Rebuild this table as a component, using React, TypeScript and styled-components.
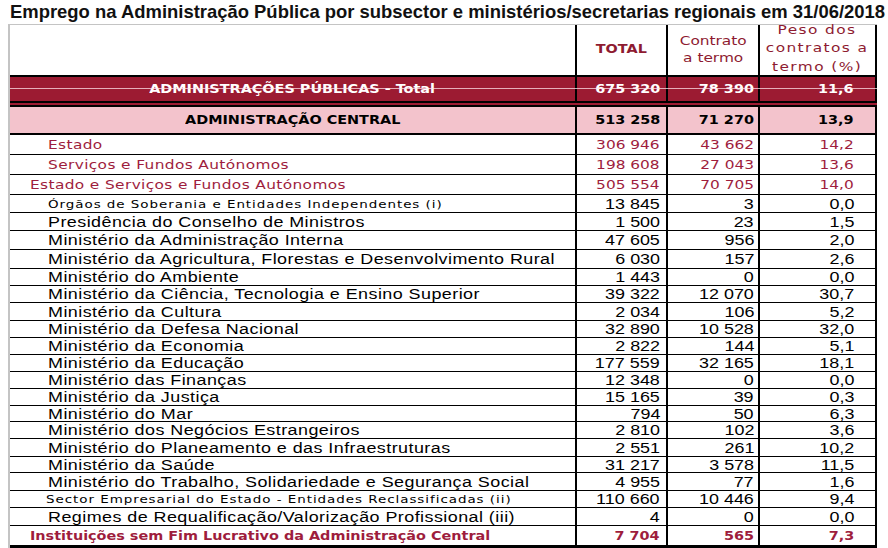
import React from 'react';
import styled, { createGlobalStyle, css } from 'styled-components';

const Global = createGlobalStyle`
  html, body { margin: 0; padding: 0; background: #ffffff; }
  body { width: 888px; height: 548px; overflow: hidden; }
`;

const RED = '#9e1d3d';
const HEAD_RED = '#8e1b31';
const BAND = '#9c1b32';
const PINK = '#f3c3cc';

const TAHOMA = '"DejaVu Sans", Verdana, sans-serif';
const ARIAL = '"Liberation Sans", Arial, sans-serif';

type Kind = 'band' | 'central' | 'red' | 'redTop' | 'small' | 'plain' | 'inst';

const Page = styled.div`
  display: flex;
  flex-direction: column;
`;

const Title = styled.h1`
  margin: 0;
  height: 24px;
  padding-left: 10px;
  font: bold 19px/24px ${ARIAL};
  color: #111111;
  white-space: nowrap;
`;

const TitleText = styled.span`
  display: inline-block;
  transform: scaleX(0.97);
  transform-origin: left center;
`;

const Table = styled.div`
  margin-left: 8px;
  width: 869px;
  box-sizing: border-box;
  border-left: 2px solid #c4c4c4;
  border-top: 1px solid #c4c4c4;
  display: flex;
  flex-direction: column;
`;

const COLS = '567px 91px 92px 117px';

const HeaderRow = styled.div`
  display: grid;
  grid-template-columns: ${COLS};
  grid-template-rows: 50px;
  height: 50px;
`;

const rowSkin: Record<Kind, ReturnType<typeof css>> = {
  band: css`
    background: ${BAND};
    color: #ffffff;
    font: bold 12px ${TAHOMA};
    border-top: 2px solid #000;
    border-bottom: 6px double #000;
    position: relative;
    &::after {
      content: '';
      position: absolute;
      left: 0;
      right: 0;
      top: 11px;
      height: 1px;
      background: rgba(255, 225, 232, 0.75);
    }
  `,
  central: css`
    background: ${PINK};
    color: #000;
    font: bold 12px ${TAHOMA};
    border-bottom: 2px solid #000;
  `,
  red: css`
    color: ${RED};
    font: 12px ${TAHOMA};
    border-bottom: 1px solid #000;
  `,
  redTop: css`
    color: ${RED};
    font: 12px ${TAHOMA};
    border-bottom: 1px solid #000;
  `,
  small: css`
    color: #000;
    font: 14px ${ARIAL};
    border-bottom: 1px solid #000;
  `,
  plain: css`
    color: #000;
    font: 14px ${ARIAL};
    border-bottom: 1px solid #000;
  `,
  inst: css`
    color: ${RED};
    font: bold 12px ${TAHOMA};
    border-bottom: 3px solid #000;
  `,
};

const Row = styled.div<{ $kind: Kind; $h: number }>`
  display: grid;
  grid-template-columns: ${COLS};
  height: ${(p) => p.$h}px;
  box-sizing: border-box;
  ${(p) => rowSkin[p.$kind]}
`;

const Cell = styled.div<{ $align: 'left' | 'right' | 'center'; $pad?: number }>`
  display: flex;
  align-items: center;
  justify-content: ${(p) =>
    p.$align === 'left' ? 'flex-start' : p.$align === 'right' ? 'flex-end' : 'center'};
  padding-left: ${(p) => (p.$align === 'left' ? p.$pad ?? 0 : 0)}px;
  padding-right: ${(p) => (p.$align === 'right' ? p.$pad ?? 0 : 0)}px;
  border-right: 2px solid #000;
  box-sizing: border-box;
  overflow: visible;
  white-space: nowrap;
  line-height: 1;
`;

const Stretch = styled.span<{
  $origin: 'left' | 'right' | 'center';
  $scale: number;
  $ls?: number;
  $small?: boolean;
}>`
  display: inline-block;
  transform: scaleX(${(p) => p.$scale});
  transform-origin: ${(p) => p.$origin} center;
  letter-spacing: ${(p) => p.$ls ?? 0}px;
  ${(p) =>
    p.$small &&
    css`
      font: 10.5px ${TAHOMA};
    `}
`;

const HeadCell = styled.div<{ $bold?: boolean; $lift?: number }>`
  display: flex;
  align-items: center;
  justify-content: center;
  min-height: 0;
  padding-bottom: ${(p) => p.$lift ?? 0}px;
  border-right: 2px solid #000;
  box-sizing: border-box;
  overflow: visible;
  color: ${HEAD_RED};
  font: ${(p) => (p.$bold ? 'bold' : 'normal')} 12px ${TAHOMA};
`;

const HeadText = styled.span<{ $lh: number; $ls?: number; $scale: number }>`
  display: inline-block;
  flex-shrink: 0;
  text-align: center;
  line-height: ${(p) => p.$lh}px;
  letter-spacing: ${(p) => p.$ls ?? 0}px;
  transform: scaleX(${(p) => p.$scale});
  transform-origin: center;
`;

type Line = {
  kind: Kind;
  h: number;
  label: string;
  indent?: number;
  center?: boolean;
  v: [string, string, string];
};

const LINES: Line[] = [
  { kind: 'band', h: 32, label: 'ADMINISTRAÇÕES PÚBLICAS - Total', center: true, v: ['675 320', '78 390', '11,6'] },
  { kind: 'central', h: 28, label: 'ADMINISTRAÇÃO CENTRAL', center: true, v: ['513 258', '71 270', '13,9'] },
  { kind: 'red', h: 20, label: 'Estado', indent: 38, v: ['306 946', '43 662', '14,2'] },
  { kind: 'red', h: 20, label: 'Serviços e Fundos Autónomos', indent: 38, v: ['198 608', '27 043', '13,6'] },
  { kind: 'redTop', h: 20, label: 'Estado e Serviços e Fundos Autónomos', indent: 20, v: ['505 554', '70 705', '14,0'] },
  { kind: 'small', h: 18, label: 'Órgãos de Soberania e Entidades Independentes (i)', indent: 38, v: ['13 845', '3', '0,0'] },
  { kind: 'plain', h: 18, label: 'Presidência do Conselho de Ministros', indent: 38, v: ['1 500', '23', '1,5'] },
  { kind: 'plain', h: 19, label: 'Ministério da Administração Interna', indent: 38, v: ['47 605', '956', '2,0'] },
  { kind: 'plain', h: 19, label: 'Ministério da Agricultura, Florestas e Desenvolvimento Rural', indent: 38, v: ['6 030', '157', '2,6'] },
  { kind: 'plain', h: 17, label: 'Ministério do Ambiente', indent: 38, v: ['1 443', '0', '0,0'] },
  { kind: 'plain', h: 17, label: 'Ministério da Ciência, Tecnologia e Ensino Superior', indent: 38, v: ['39 322', '12 070', '30,7'] },
  { kind: 'plain', h: 18, label: 'Ministério da Cultura', indent: 38, v: ['2 034', '106', '5,2'] },
  { kind: 'plain', h: 17, label: 'Ministério da Defesa Nacional', indent: 38, v: ['32 890', '10 528', '32,0'] },
  { kind: 'plain', h: 17, label: 'Ministério da Economia', indent: 38, v: ['2 822', '144', '5,1'] },
  { kind: 'plain', h: 17, label: 'Ministério da Educação', indent: 38, v: ['177 559', '32 165', '18,1'] },
  { kind: 'plain', h: 17, label: 'Ministério das Finanças', indent: 38, v: ['12 348', '0', '0,0'] },
  { kind: 'plain', h: 17, label: 'Ministério da Justiça', indent: 38, v: ['15 165', '39', '0,3'] },
  { kind: 'plain', h: 16, label: 'Ministério do Mar', indent: 38, v: ['794', '50', '6,3'] },
  { kind: 'plain', h: 17, label: 'Ministério dos Negócios Estrangeiros', indent: 38, v: ['2 810', '102', '3,6'] },
  { kind: 'plain', h: 18, label: 'Ministério do Planeamento e das Infraestruturas', indent: 38, v: ['2 551', '261', '10,2'] },
  { kind: 'plain', h: 16, label: 'Ministério da Saúde', indent: 38, v: ['31 217', '3 578', '11,5'] },
  { kind: 'plain', h: 18, label: 'Ministério do Trabalho, Solidariedade e Segurança Social', indent: 38, v: ['4 955', '77', '1,6'] },
  { kind: 'small', h: 17, label: 'Sector Empresarial do Estado - Entidades Reclassificadas (ii)', indent: 36, v: ['110 660', '10 446', '9,4'] },
  { kind: 'plain', h: 18, label: 'Regimes de Requalificação/Valorização Profissional (iii)', indent: 38, v: ['4', '0', '0,0'] },
  { kind: 'inst', h: 22, label: 'Instituições sem Fim Lucrativo da Administração Central', indent: 20, v: ['7 704', '565', '7,3'] },
];

const LABEL_FIT: Record<Kind, { scale: number; ls: number }> = {
  band: { scale: 1.2, ls: 0 },
  central: { scale: 1.2, ls: 0 },
  red: { scale: 1.28, ls: 0.3 },
  redTop: { scale: 1.28, ls: 0.3 },
  small: { scale: 1.28, ls: 0.75 },
  plain: { scale: 1.28, ls: 0.35 },
  inst: { scale: 1.2, ls: 0 },
};

const isBold = (k: Kind) => k === 'band' || k === 'central' || k === 'inst';

const PADS = [6, 4, 21];

export default function App() {
  return (
    <Page>
      <Global />
      <Title>
        <TitleText>
          Emprego na Administração Pública por subsector e ministérios/secretarias regionais em 31/06/2018
        </TitleText>
      </Title>
      <Table>
        <HeaderRow>
          <HeadCell />
          <HeadCell $bold $lift={3}>
            <HeadText $lh={14} $scale={1.2}>
              TOTAL
            </HeadText>
          </HeadCell>
          <HeadCell $lift={1}>
            <HeadText $lh={17} $scale={1.28}>
              Contrato
              <br />a termo
            </HeadText>
          </HeadCell>
          <HeadCell $lift={3}>
            <HeadText $lh={18.5} $scale={1.28} $ls={1.1}>
              Peso dos
              <br />
              contratos a
              <br />
              termo (%)
            </HeadText>
          </HeadCell>
        </HeaderRow>
        {LINES.map((l) => {
          const fit = LABEL_FIT[l.kind];
          const numScale = isBold(l.kind) ? 1.2 : 1.28;
          return (
            <Row key={l.label} $kind={l.kind} $h={l.h}>
              <Cell $align={l.center ? 'center' : 'left'} $pad={l.indent}>
                <Stretch
                  $origin={l.center ? 'center' : 'left'}
                  $scale={fit.scale}
                  $ls={fit.ls}
                  $small={l.kind === 'small'}
                >
                  {l.label}
                </Stretch>
              </Cell>
              {l.v.map((val, i) => (
                <Cell key={i} $align="right" $pad={PADS[i]}>
                  <Stretch $origin="right" $scale={numScale}>
                    {val}
                  </Stretch>
                </Cell>
              ))}
            </Row>
          );
        })}
      </Table>
    </Page>
  );
}
